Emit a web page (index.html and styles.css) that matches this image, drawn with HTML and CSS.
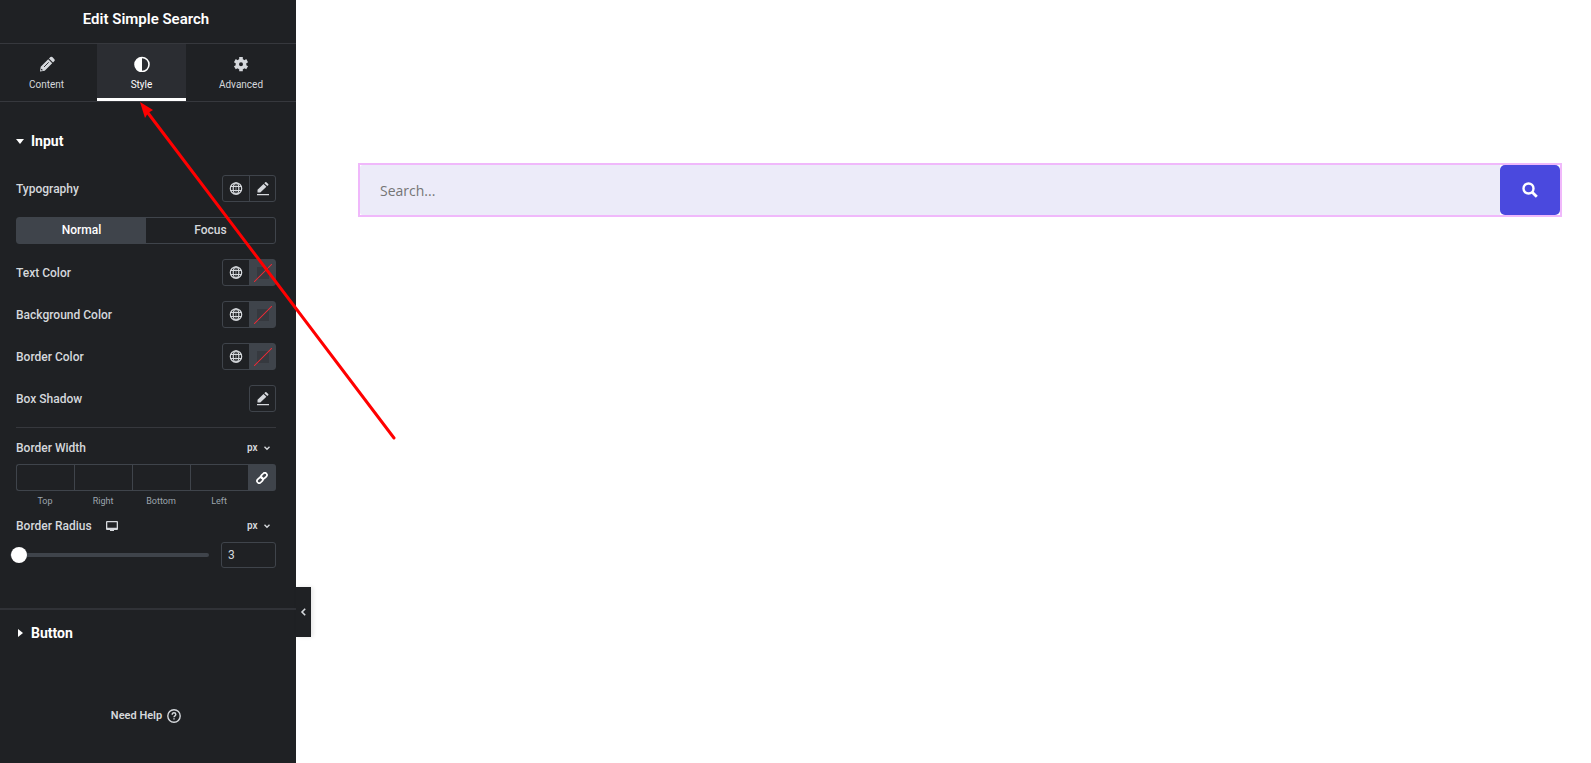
FILE: index.html
```html
<!DOCTYPE html>
<html lang="en">
<head>
  <meta charset="UTF-8">
  <meta name="viewport" content="width=device-width, initial-scale=1.0">
  <title>Edit Simple Search</title>
  <link rel="stylesheet" href="styles.css">
</head>
<body>
  <!-- Shared icons -->
  <svg class="sprite" aria-hidden="true">
    <symbol id="globe" viewBox="0 0 14 14">
      <g fill="none" stroke="currentColor" stroke-width="1.2">
        <circle cx="7" cy="6.500" r="5.700"/>
        <ellipse cx="7" cy="6.500" rx="2.800" ry="5.700"/>
        <path d="M1.500 4.500h11M1.500 8.500h11" stroke-width="1"/>
      </g>
      <path d="M7 1v11" stroke="currentColor" stroke-width=".6"/>
    </symbol>
    <symbol id="edit" viewBox="0 0 14 14">
      <path fill="currentColor" d="M1.500 10.500V7.800L7.500 1.900 10.400 4.700 4.300 10.500zM8.300 1.200l.9-.9q.6-.5 1.200 0l1.800 1.700q.6.6 0 1.200l-.9.900zM1 12h12v1.200H1z"/>
    </symbol>
    <symbol id="chevron" viewBox="0 0 8 8">
      <path fill="none" stroke="currentColor" stroke-width="1.4" d="M1.500 2.700L4 5.200l2.500-2.500"/>
    </symbol>
  </svg>

  <div class="editor">
    <aside class="panel">
      <header class="panel-header">
        <h1>Edit Simple Search</h1>
      </header>

      <nav class="tabs">
        <button class="tab" type="button">
          <svg viewBox="0 0 16 16"><path fill="currentColor" d="M1 15.500l.7-4.700L9.200 3.300l4 4-7.500 7.500zM10 2.500l1.400-1.400q1-.7 1.900 0l2.100 2.100q.7 1 0 1.900L14 6.500z"/><path d="M5 11l4.700-4.700" stroke="#1f2124" stroke-width=".9"/><path d="M2.200 13.100l1.200 1.200" stroke="#1f2124" stroke-width="1.200"/></svg>
          <span>Content</span>
        </button>
        <button class="tab" type="button" aria-current="true">
          <svg viewBox="0 0 16 16"><circle cx="8" cy="8.500" r="7" fill="none" stroke="currentColor" stroke-width="1.600"/><path fill="currentColor" d="M8 1.500a7 7 0 0 0 0 14z"/></svg>
          <span>Style</span>
        </button>
        <button class="tab" type="button">
          <svg viewBox="0 0 16 16"><g fill="none" stroke="currentColor"><circle cx="8" cy="8.200" r="3.700" stroke-width="3.400"/><path stroke-width="3.600" d="M8 1.100v2.600M8 12.700v2.600M1.850 4.650l2.250 1.300M11.900 10.450l2.250 1.300M14.150 4.650l-2.250 1.300M4.100 10.450l-2.250 1.300"/></g></svg>
          <span>Advanced</span>
        </button>
      </nav>

      <!-- Input section -->
      <section class="section">
        <h2 class="section-title"><span class="caret down"></span>Input</h2>

        <div class="controls">
          <div class="row">
            <span class="label">Typography</span>
            <div class="btn-group">
              <button type="button" aria-label="Global typography"><svg><use href="#globe"/></svg></button>
              <button type="button" aria-label="Edit typography"><svg><use href="#edit"/></svg></button>
            </div>
          </div>

          <div class="state-tabs">
            <button class="active" type="button">Normal</button>
            <button type="button">Focus</button>
          </div>

          <div class="row">
            <span class="label">Text Color</span>
            <div class="btn-group">
              <button type="button" aria-label="Global text color"><svg><use href="#globe"/></svg></button>
              <button class="swatch" type="button" aria-label="Pick text color"></button>
            </div>
          </div>

          <div class="row">
            <span class="label">Background Color</span>
            <div class="btn-group">
              <button type="button" aria-label="Global background color"><svg><use href="#globe"/></svg></button>
              <button class="swatch" type="button" aria-label="Pick background color"></button>
            </div>
          </div>

          <div class="row">
            <span class="label">Border Color</span>
            <div class="btn-group">
              <button type="button" aria-label="Global border color"><svg><use href="#globe"/></svg></button>
              <button class="swatch" type="button" aria-label="Pick border color"></button>
            </div>
          </div>

          <div class="row">
            <span class="label">Box Shadow</span>
            <div class="btn-group">
              <button type="button" aria-label="Edit box shadow"><svg><use href="#edit"/></svg></button>
            </div>
          </div>
        </div>

        <div class="control divided">
          <div class="control-head">
            <span class="label">Border Width</span>
            <div class="unit">
              <select aria-label="Border width unit"><option>px</option><option>em</option></select>
              <svg><use href="#chevron"/></svg>
            </div>
          </div>
          <div class="dimensions">
            <div class="dimension"><input type="text" id="bwTop"><label for="bwTop">Top</label></div>
            <div class="dimension"><input type="text" id="bwRight"><label for="bwRight">Right</label></div>
            <div class="dimension"><input type="text" id="bwBottom"><label for="bwBottom">Bottom</label></div>
            <div class="dimension"><input type="text" id="bwLeft"><label for="bwLeft">Left</label></div>
            <button class="link-btn" type="button" aria-label="Link values">
              <svg viewBox="0 0 14 14"><g fill="none" stroke="currentColor" stroke-width="2"><rect x="5.400" y="2" width="7.800" height="5" rx="2.500" transform="rotate(-45 9.300 4.500)"/><rect x=".8" y="7" width="7.800" height="5" rx="2.500" transform="rotate(-45 4.700 9.500)"/></g></svg>
            </button>
          </div>
        </div>

        <div class="control">
          <div class="control-head">
            <label class="label" for="radius">Border Radius</label>
            <svg class="device" viewBox="0 0 12 10"><path fill="currentColor" fill-rule="evenodd" d="M1 0h10q1 0 1 1v7q0 1-1 1H8v1H4V9H1q-1 0-1-1V1q0-1 1-1zM1.300 1.300v5.400h9.400V1.300z"/></svg>
            <div class="unit">
              <select aria-label="Border radius unit"><option>px</option><option>em</option></select>
              <svg><use href="#chevron"/></svg>
            </div>
          </div>
          <div class="slider">
            <input type="range" min="0" max="1000" value="3" aria-label="Border radius slider">
            <input type="text" id="radius" value="3">
          </div>
        </div>
      </section>

      <!-- Button section -->
      <section class="section collapsed">
        <h2 class="section-title"><span class="caret right"></span>Button</h2>
      </section>

      <a class="help" href="#">Need Help
        <svg viewBox="0 0 14 14"><g fill="none" stroke="currentColor" stroke-width="1.400"><circle cx="7" cy="7" r="6.200"/><path d="M5.200 5.700q0-1.900 1.800-1.900t1.800 1.600q0 .8-.9 1.400T7 8.300"/></g><path fill="currentColor" d="M6.300 9.200h1.400v1.400H6.300z"/></svg>
      </a>

      <button class="panel-toggle" type="button" aria-label="Hide panel">
        <svg viewBox="0 0 8 8"><path fill="none" stroke="currentColor" stroke-width="1.600" d="M5.200 .7L2 4l3.200 3.300"/></svg>
      </button>
    </aside>

    <main class="preview">
      <form class="search">
        <input type="search" placeholder="Search..." aria-label="Search">
        <button type="submit" aria-label="Search">
          <svg viewBox="0 0 16 16"><g fill="none" stroke="currentColor"><circle cx="6.500" cy="6.500" r="5" stroke-width="2.400"/><path d="M10.200 10.200l4.600 4.600" stroke-width="2.800"/></g></svg>
        </button>
      </form>
    </main>

    <!-- Arrow pointing at the Style tab -->
    <svg class="arrow" viewBox="0 0 256 340" aria-hidden="true">
      <path d="M8 11L254 336" fill="none" stroke="#ff0000" stroke-width="3" stroke-linecap="round"/>
      <path d="M0 0l13 8-5 3-3 5z" fill="#ff0000"/>
    </svg>
  </div>
</body>
</html>
```
FILE: styles.css
```css
* {
  box-sizing: border-box;
}

body {
  margin: 0;
  background: #ffffff;
  font-family: Roboto, "Liberation Sans", sans-serif;
  font-size: 12px;
}

button,
input,
select {
  font-family: inherit;
  margin: 0;
  padding: 0;
  border: none;
  border-radius: 0;
  background: transparent;
  color: inherit;
}

button {
  cursor: pointer;
}

h1,
h2 {
  margin: 0;
}

.sprite {
  position: absolute;
  width: 0;
  height: 0;
}

.editor {
  position: relative;
  display: flex;
  min-height: 100vh;
}

/* Side panel */
.panel {
  position: relative;
  display: flex;
  flex-direction: column;
  flex: 0 0 296px;
  background: #1f2124;
  color: #d5d8dc;
}

.panel-header {
  padding: 9px 4px 14px 0;
  border-bottom: 1px solid #36383d;
  text-align: center;
}

.panel-header h1 {
  color: #ffffff;
  font-size: 15px;
  font-weight: 600;
  line-height: 20px;
}

.tabs {
  display: grid;
  grid-template-columns: 97fr 89fr 110fr;
  border-bottom: 1px solid #36383d;
}

.tab {
  display: flex;
  flex-direction: column;
  align-items: center;
  gap: 7px;
  padding: 12px 0 7px;
  border-bottom: 3px solid transparent;
  font-size: 10px;
  font-weight: 400;
  line-height: 12px;
}

.tab:first-child {
  padding-right: 4px;
}

.tab svg {
  width: 16px;
  height: 16px;
}

.tab[aria-current] {
  background: #2b2d32;
  border-bottom-color: #ffffff;
  color: #ffffff;
}

/* Sections */
.section {
  padding: 29px 20px 40px 16px;
  border-bottom: 2px solid #303237;
}

.section.collapsed {
  padding-top: 13px;
  padding-bottom: 0;
  border-bottom: none;
}

.section-title {
  display: flex;
  align-items: center;
  color: #ffffff;
  font-size: 14px;
  font-weight: 700;
  line-height: 20px;
}

.caret {
  width: 15px;
}

.caret::before {
  content: "";
  display: block;
  width: 0;
  border: 4px solid transparent;
}

.caret.down::before {
  border-top: 5px solid #ffffff;
  border-bottom: none;
}

.caret.right::before {
  margin-left: 2px;
  border-left: 5px solid #ffffff;
  border-right: none;
}

.controls {
  display: flex;
  flex-direction: column;
  gap: 15px;
  margin-top: 24px;
}

.row {
  display: flex;
  justify-content: space-between;
  align-items: center;
}

.label {
  font-weight: 500;
  line-height: 16px;
}

.btn-group {
  display: flex;
  border: 1px solid #3f444b;
  border-radius: 3px;
}

.btn-group button {
  display: flex;
  justify-content: center;
  align-items: center;
  width: 25px;
  height: 25px;
}

.btn-group button + button {
  width: 26px;
  margin-left: 1px;
  border-left: 1px solid #3f444b;
}

.btn-group svg {
  width: 14px;
  height: 14px;
}

.btn-group .swatch {
  background:
    linear-gradient(135deg, transparent 47%, #e02b35 48%, #e02b35 52%, transparent 53%) center / 18px 18px no-repeat,
    linear-gradient(#36393f, #36393f) center / 12px 12px no-repeat,
    #3f444b;
}

.state-tabs {
  display: flex;
  border: 1px solid #3f444b;
  border-radius: 3px;
}

.state-tabs button {
  flex: 1;
  height: 25px;
  padding-bottom: 2px;
  font-size: 12px;
  font-weight: 500;
}

.state-tabs .active {
  background: #3f444b;
  color: #ffffff;
}

/* Border controls */
.control {
  margin-top: 11px;
}

.control.divided {
  margin-top: 15px;
  padding-top: 12px;
  border-top: 1px solid #36383d;
}

.control-head {
  display: flex;
  align-items: center;
  margin-bottom: 8px;
}

.device {
  width: 12px;
  height: 10px;
  margin-left: 14px;
}

.unit {
  display: flex;
  align-items: center;
  gap: 4px;
  margin-left: auto;
  padding-right: 5px;
}

.unit select {
  appearance: none;
  width: 12px;
  font-size: 10px;
  font-weight: 600;
  line-height: 16px;
}

.unit svg {
  width: 8px;
  height: 8px;
}

.dimensions {
  display: flex;
  align-items: flex-start;
}

.dimension {
  display: flex;
  flex: 1;
  flex-direction: column;
  align-items: center;
  gap: 4px;
}

.dimension input {
  width: 100%;
  height: 27px;
  border: 1px solid #3f444b;
  border-right: none;
  text-align: center;
}

.dimension:first-child input {
  border-radius: 3px 0 0 3px;
}

.dimension label {
  color: #9da5ae;
  font-size: 9px;
  line-height: 12px;
}

.link-btn {
  display: flex;
  justify-content: center;
  align-items: center;
  width: 28px;
  height: 27px;
  border-radius: 0 3px 3px 0;
  background: #3f444b;
  color: #ffffff;
}

.link-btn svg {
  width: 12px;
  height: 12px;
}

.slider {
  display: flex;
  align-items: center;
  gap: 12px;
  margin-left: -6px;
}

.slider input[type="range"] {
  appearance: none;
  flex: 1;
  min-width: 0;
  height: 16px;
}

.slider input[type="range"]::-webkit-slider-runnable-track {
  height: 4px;
  border-radius: 4px;
  background: #3f444b;
}

.slider input[type="range"]::-webkit-slider-thumb {
  appearance: none;
  width: 16px;
  height: 16px;
  margin-top: -6px;
  border-radius: 50%;
  background: #ffffff;
}

.slider input[type="text"] {
  width: 55px;
  height: 26px;
  padding: 0 6px;
  border: 1px solid #3f444b;
  border-radius: 3px;
  font-size: 12px;
}

.help {
  display: flex;
  justify-content: center;
  align-items: center;
  gap: 5px;
  margin-top: 65px;
  padding-right: 4px;
  color: #d5d8dc;
  font-size: 11px;
  font-weight: 600;
  line-height: 16px;
  text-decoration: none;
}

.help svg {
  width: 14px;
  height: 14px;
}

.panel-toggle {
  position: absolute;
  top: 587px;
  left: 100%;
  display: flex;
  justify-content: center;
  align-items: center;
  width: 15px;
  height: 50px;
  background: #1f2124;
  box-shadow: 2px 0 4px rgba(0, 0, 0, 0.1);
}

.panel-toggle svg {
  width: 8px;
  height: 8px;
}

/* Page preview */
.preview {
  flex: 1;
  padding: 163px 29px 0 62px;
}

.search {
  display: flex;
  border: 2px solid #f0b8fb;
}

.search input {
  flex: 1;
  min-width: 0;
  height: 50px;
  padding: 0 20px;
  border-radius: 3px 0 0 3px;
  background: #ecebf9;
  font-family: "Open Sans", "Noto Sans", sans-serif;
  font-size: 14px;
}

.search input::placeholder {
  color: #757575;
}

.search button {
  display: flex;
  justify-content: center;
  align-items: center;
  width: 60px;
  border-radius: 5px;
  background: #4a49de;
  color: #ffffff;
}

.search svg {
  width: 16px;
  height: 16px;
}

.arrow {
  position: absolute;
  top: 102px;
  left: 140px;
  width: 256px;
  height: 340px;
  pointer-events: none;
}
```
